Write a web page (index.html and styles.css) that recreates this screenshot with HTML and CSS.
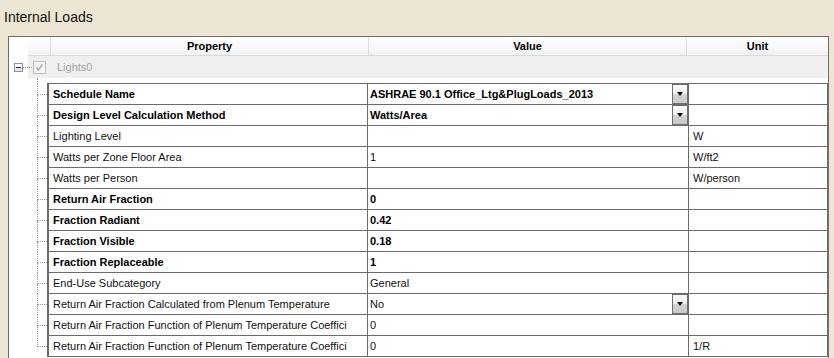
FILE: index.html
```html
<!DOCTYPE html>
<html>
<head>
<meta charset="utf-8">
<link rel="stylesheet" href="styles.css">
</head>
<body>
<div class="title">Internal Loads</div>
<div class="panel">
  <div class="header">
    <div class="hcell"></div>
    <div class="hcell sep">Property</div>
    <div class="hcell sep">Value</div>
    <div class="hcell sep">Unit</div>
  </div>
  <div class="parent">
    <div class="exp-col">
      <div class="expander"><span class="minus"></span></div>
      <div class="hdots"></div>
    </div>
    <div class="parent-body">
      <div class="hdots short"></div>
      <div class="checkbox">
        <svg width="11" height="11" viewBox="0 0 11 11"><polyline points="2.5,5.5 4.5,8 8.5,2.5" fill="none" stroke="#b4b4b4" stroke-width="1.6"/></svg>
      </div>
      <span class="plabel">Lights0</span>
    </div>
  </div>
  <div class="children">
    <div class="tree">
      <div class="tree-lead"></div>
      <div class="stub"><div class="stub-top"></div><div class="stub-bot"></div></div>
      <div class="stub"><div class="stub-top"></div><div class="stub-bot"></div></div>
      <div class="stub"><div class="stub-top"></div><div class="stub-bot"></div></div>
      <div class="stub"><div class="stub-top"></div><div class="stub-bot"></div></div>
      <div class="stub"><div class="stub-top"></div><div class="stub-bot"></div></div>
      <div class="stub"><div class="stub-top"></div><div class="stub-bot"></div></div>
      <div class="stub"><div class="stub-top"></div><div class="stub-bot"></div></div>
      <div class="stub"><div class="stub-top"></div><div class="stub-bot"></div></div>
      <div class="stub"><div class="stub-top"></div><div class="stub-bot"></div></div>
      <div class="stub"><div class="stub-top"></div><div class="stub-bot"></div></div>
      <div class="stub"><div class="stub-top"></div><div class="stub-bot"></div></div>
      <div class="stub"><div class="stub-top"></div><div class="stub-bot"></div></div>
      <div class="stub last"><div class="stub-top"></div><div class="stub-bot"></div></div>
    </div>
    <div class="grid">
      <div class="row bold">
        <div class="cell prop">Schedule Name</div>
        <div class="cell val"><span class="vtext">ASHRAE 90.1 Office_Ltg&amp;PlugLoads_2013</span><span class="dd"><span class="tri"></span></span></div>
        <div class="cell unit"></div>
      </div>
      <div class="row bold">
        <div class="cell prop">Design Level Calculation Method</div>
        <div class="cell val"><span class="vtext">Watts/Area</span><span class="dd"><span class="tri"></span></span></div>
        <div class="cell unit"></div>
      </div>
      <div class="row">
        <div class="cell prop">Lighting Level</div>
        <div class="cell val"></div>
        <div class="cell unit">W</div>
      </div>
      <div class="row">
        <div class="cell prop">Watts per Zone Floor Area</div>
        <div class="cell val">1</div>
        <div class="cell unit">W/ft2</div>
      </div>
      <div class="row">
        <div class="cell prop">Watts per Person</div>
        <div class="cell val"></div>
        <div class="cell unit">W/person</div>
      </div>
      <div class="row bold">
        <div class="cell prop">Return Air Fraction</div>
        <div class="cell val">0</div>
        <div class="cell unit"></div>
      </div>
      <div class="row bold">
        <div class="cell prop">Fraction Radiant</div>
        <div class="cell val">0.42</div>
        <div class="cell unit"></div>
      </div>
      <div class="row bold">
        <div class="cell prop">Fraction Visible</div>
        <div class="cell val">0.18</div>
        <div class="cell unit"></div>
      </div>
      <div class="row bold">
        <div class="cell prop">Fraction Replaceable</div>
        <div class="cell val">1</div>
        <div class="cell unit"></div>
      </div>
      <div class="row">
        <div class="cell prop">End-Use Subcategory</div>
        <div class="cell val">General</div>
        <div class="cell unit"></div>
      </div>
      <div class="row">
        <div class="cell prop">Return Air Fraction Calculated from Plenum Temperature</div>
        <div class="cell val"><span class="vtext">No</span><span class="dd"><span class="tri"></span></span></div>
        <div class="cell unit"></div>
      </div>
      <div class="row">
        <div class="cell prop">Return Air Fraction Function of Plenum Temperature Coeffici</div>
        <div class="cell val">0</div>
        <div class="cell unit"></div>
      </div>
      <div class="row">
        <div class="cell prop">Return Air Fraction Function of Plenum Temperature Coeffici</div>
        <div class="cell val">0</div>
        <div class="cell unit">1/R</div>
      </div>
    </div>
  </div>
</div>
</body>
</html>
```
FILE: styles.css
```css
html, body {
  margin: 0;
  padding: 0;
}
body {
  width: 834px;
  height: 358px;
  overflow: hidden;
  background: #ece5d3;
  font-family: "Liberation Sans", Arial, sans-serif;
  color: #111;
}
.title {
  font-size: 14px;
  line-height: 16px;
  padding: 9px 0 0 4px;
  height: 16px;
  color: #111;
}
.panel {
  margin: 11px 0 0 8px;
  width: 821px;
  height: 322px;
  box-sizing: border-box;
  border: 1px solid #6f6f6f;
  border-bottom: none;
  background: #fff;
}
.header {
  display: grid;
  grid-template-columns: 22px 318px 318px 1fr;
  margin-left: 19px;
  height: 19px;
  box-sizing: border-box;
  background: linear-gradient(#ffffff, #f1f2f4);
  border-bottom: 1px solid #d9d9d9;
}
.hcell {
  font-size: 11px;
  font-weight: bold;
  color: #000;
  text-align: center;
  line-height: 18px;
}
.hcell.sep {
  border-left: 1px solid #dedede;
}
.parent {
  display: flex;
  height: 22px;
}
.exp-col {
  width: 19px;
  display: flex;
  align-items: center;
  padding-left: 5px;
  box-sizing: border-box;
}
.expander {
  width: 9px;
  height: 9px;
  box-sizing: border-box;
  border: 1px solid #8a93a6;
  background: linear-gradient(#ffffff, #e4e4e4);
  display: flex;
  align-items: center;
  justify-content: center;
}
.minus {
  width: 5px;
  height: 1px;
  background: #1f3370;
}
.hdots {
  width: 5px;
  border-top: 1px dotted #9a9a9a;
  margin-top: 1px;
}
.hdots.short {
  width: 4px;
  margin-right: 1px;
}
.parent-body {
  flex: 1;
  background: #efefef;
  display: flex;
  align-items: center;
}
.checkbox {
  width: 13px;
  height: 13px;
  box-sizing: border-box;
  border: 1px solid #bcbcbc;
  background: #f4f4f4;
  display: flex;
  align-items: center;
  justify-content: center;
}
.plabel {
  margin-left: 11px;
  font-size: 11px;
  color: #a4a4a4;
}
.children {
  display: flex;
  margin-left: 28px;
}
.tree {
  width: 10px;
  display: flex;
  flex-direction: column;
}
.tree-lead {
  height: 6px;
  border-left: 1px dotted #9a9a9a;
}
.stub {
  height: 21px;
  display: flex;
  flex-direction: column;
}
.stub-top {
  height: 11px;
  box-sizing: border-box;
  border-left: 1px dotted #9a9a9a;
  border-bottom: 1px dotted #9a9a9a;
}
.stub-bot {
  height: 10px;
  border-left: 1px dotted #9a9a9a;
}
.stub.last .stub-bot {
  border-left: none;
}
.grid {
  margin-top: 5px;
  width: 781px;
  box-sizing: border-box;
  border-left: 2px solid #6b6b6b;
  border-top: 1px solid #6b6b6b;
}
.row {
  display: grid;
  grid-template-columns: 319px 321px 139px;
  height: 21px;
  box-sizing: border-box;
  border-bottom: 1px solid #6b6b6b;
  font-size: 11px;
}
.row.bold {
  font-weight: bold;
  color: #000;
}
.cell {
  box-sizing: border-box;
  border-right: 1px solid #6b6b6b;
  display: flex;
  align-items: center;
  white-space: nowrap;
  overflow: hidden;
}
.prop {
  padding-left: 4px;
}
.val {
  padding-left: 2px;
}
.unit {
  padding-left: 4px;
  font-weight: normal;
}
.vtext {
  flex: 1;
}
.dd {
  width: 16px;
  height: 20px;
  box-sizing: border-box;
  border: 1px solid #6e6e6e;
  background: linear-gradient(#fbfbfb 0%, #f0f0f0 45%, #d2d2d2 55%, #c9c9c9 100%);
  display: flex;
  justify-content: center;
  padding-top: 7px;
}
.tri {
  width: 0;
  height: 0;
  border-left: 3.5px solid transparent;
  border-right: 3.5px solid transparent;
  border-top: 4px solid #000;
}
```
